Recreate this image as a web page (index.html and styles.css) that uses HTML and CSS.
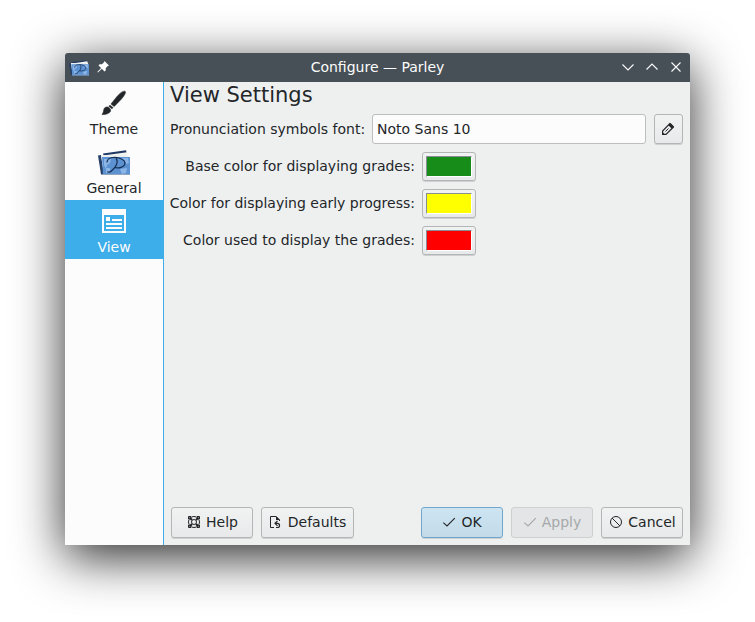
FILE: index.html
```html
<!DOCTYPE html>
<html lang="en">
<head>
<meta charset="utf-8">
<title>Configure — Parley</title>
<link rel="stylesheet" href="styles.css">
</head>
<body>
<svg class="defs" width="0" height="0">
  <symbol id="parley" viewBox="0 0 32 26">
    <path d="M5 3.500 28 .3 29 4 6 7Z" fill="#1f3864"/>
    <path d="M5 5.500 29 2.200 31 7V20H7Z" fill="#f4f4ee"/>
    <path d="M0 5.500 3 5 6 24.500H3Z" fill="#253f66"/>
    <path d="M3 5 28 5V8L6 24Z" fill="#e9eeee"/>
    <path d="M4 7H32V25H5Z" fill="#5d92d2"/>
    <path d="M6 9h7l-1 4-3 2-1 4-2-4zM24 8h6l1 5-3 1zM8 18h4v5H8zM22 19l7-1-1 5-4 1z" fill="#8ab5e6"/>
    <path d="M5 24.500H32" stroke="#91a6bc"/>
    <path d="M9 12.500C9 7 17 6.800 21 8C26 9.500 28 12 26.500 15C25 17.500 20 18.500 17 17.500M18 8.500C21 12 17.500 17.500 14 20.500C12 22.500 9.500 22.500 9.500 21.500" fill="none" stroke="#122b50" stroke-width="1.200"/>
  </symbol>
  <symbol id="check" viewBox="0 0 16 16">
    <path d="M2.300 8.700 6 12 13.800 4.200" fill="none" stroke="currentColor" stroke-width="1.100"/>
  </symbol>
</svg>
<div class="window">
  <header class="titlebar">
    <svg class="app-icon" width="20" height="16" viewBox="0 0 32 26" preserveAspectRatio="none"><use href="#parley" width="32" height="26"/></svg>
    <svg class="pin" width="12" height="12" viewBox="0 0 12 12"><path d="M7.500 0 12 4.500 10.800 5 8.800 7 8.700 9.500 7.500 10.500 4.800 7.800 1 11.600.3 11 4.100 7.100 1.500 4.500 2.500 3.300 5 3.200 7 1.200Z" fill="#fff"/></svg>
    <h1 class="caption">Configure — Parley</h1>
    <div class="controls">
      <svg width="12" height="12" viewBox="0 0 12 12"><path d="M.5 3.500 6 9 11.500 3.500"/></svg>
      <svg width="12" height="12" viewBox="0 0 12 12"><path d="M.5 8.500 6 3 11.500 8.500"/></svg>
      <svg width="12" height="12" viewBox="0 0 12 12"><path d="M1.500 1.500 10.500 10.500M10.500 1.500 1.500 10.500"/></svg>
    </div>
  </header>
  <div class="body">
    <nav class="sidebar">
      <div class="page">
        <svg width="32" height="32" viewBox="0 0 32 32"><path d="M27 4.200C25 3.700 22 6 19 9.500L13 17 16.200 19.500 23 12.500C26 9 28.500 5.500 27 4.200ZM12 18.200 15 20.600 14 21.800 10.800 19.200ZM9.800 20C7 19.600 5.800 21.300 5.600 23.800 5.400 25.300 4.800 26.500 4 27.500 7.500 27.900 11.800 26.300 12.600 24 13 22.300 11.500 20.600 9.800 20Z" fill="#232629" stroke="#232629" stroke-width=".6"/></svg>
        <span>Theme</span>
      </div>
      <div class="page">
        <svg width="32" height="32" viewBox="0 -4 32 32"><use href="#parley" width="32" height="26"/></svg>
        <span>General</span>
      </div>
      <div class="page selected">
        <svg width="32" height="32" viewBox="0 0 32 32"><path d="M4 4H28V28H4ZM6 10V26H26V10Z" fill="#fcfcfc" fill-rule="evenodd"/><path d="M8 12h4v4H8zM14 14h10v2H14zM8 18h16v2H8zM8 22h16v2H8z" fill="#fcfcfc"/></svg>
        <span>View</span>
      </div>
    </nav>
    <main class="content">
      <h2>View Settings</h2>
      <div class="font-row">
        <span>Pronunciation symbols font:</span>
        <div class="field">Noto Sans 10</div>
        <button class="btn edit"><svg width="16" height="16" viewBox="0 0 16 16"><path d="M2.600 13.400V10L9.800 2.700 13.300 6.200 6 13.400Z" fill="none" stroke="#232629" stroke-width="1.200"/><path d="M8.300 4.200 10.500 2 14 5.500 11.800 7.700ZM2 10.500 5.500 14H2Z" fill="#232629"/><path d="M5.500 10.500 8.500 7.500" stroke="#232629"/></svg></button>
      </div>
      <div class="colors">
        <span>Base color for displaying grades:</span><button class="btn color"><i class="swatch green"></i></button>
        <span>Color for displaying early progress:</span><button class="btn color"><i class="swatch yellow"></i></button>
        <span>Color used to display the grades:</span><button class="btn color"><i class="swatch red"></i></button>
      </div>
      <footer>
        <button class="btn"><svg width="16" height="16" viewBox="0 0 16 16" fill="none" stroke="#232629"><circle cx="8" cy="8" r="5.500"/><circle cx="8" cy="8" r="2.500"/><path d="M2.500 5V2.500H5M11 2.500H13.500V5M13.500 11V13.500H11M5 13.500H2.500V11"/><path d="M3.500 3.500 6 6M12.500 3.500 10 6M3.500 12.500 6 10M12.500 12.500 10 10" stroke-width="2"/></svg>Help</button>
        <button class="btn defaults"><svg width="16" height="16" viewBox="0 0 16 16" fill="none" stroke="#232629"><path d="M6 13.500H2.500V2.500H8L11.500 6V7"/><path d="M8 2V6H12Z" fill="#232629" stroke="none"/><path d="M9.500 6.800 7 9.300 9.500 11.800M7 9.300H9.500C12.200 9.300 12.200 13.500 9.500 13.500H8" stroke-width="1.200"/></svg>Defaults</button>
        <button class="btn primary"><svg width="16" height="16"><use href="#check"/></svg>OK</button>
        <button class="btn disabled" disabled><svg width="16" height="16"><use href="#check"/></svg>Apply</button>
        <button class="btn"><svg width="16" height="16" viewBox="0 0 16 16" fill="none" stroke="#232629"><circle cx="8" cy="8" r="5.500"/><path d="M4 4 12 12"/></svg>Cancel</button>
      </footer>
    </main>
  </div>
</div>
</body>
</html>
```
FILE: styles.css
```css
* { box-sizing: border-box; }
body {
  margin: 0;
  padding: 53px 65px 0;
  height: 622px;
  overflow: hidden;
  background: #fff;
  color: #232629;
  font: 14px/18px "DejaVu Sans", sans-serif;
}
svg { display: block; flex: none; }
.defs { position: absolute; }
.window {
  width: 625px;
  height: 492px;
  display: flex;
  flex-direction: column;
  border-radius: 4px 4px 0 0;
  box-shadow: 0 12px 50px rgba(0, 0, 0, .84);
}
.titlebar {
  height: 29px;
  display: flex;
  align-items: center;
  padding: 0 8px 1px 4px;
  background: #475057;
  color: #fcfcfc;
  border-radius: 3px 3px 0 0;
}
.app-icon { margin-top: 1px; }
.pin { margin-left: 8px; }
.caption {
  flex: 1;
  margin: 0;
  padding-left: 24px;
  font-size: 14px;
  font-weight: 400;
  text-align: center;
}
.controls { display: flex; gap: 12px; fill: none; stroke: #fcfcfc; stroke-width: 1.1; }
.body { flex: 1; display: flex; min-height: 0; }
.sidebar { width: 99px; background: #fcfcfc; border-right: 1px solid #3daee9; }
.page {
  height: 59px;
  padding-top: 5px;
  display: flex;
  flex-direction: column;
  align-items: center;
}
.page span { margin-top: 1px; }
.selected { background: #3daee9; color: #fcfcfc; }
.content {
  flex: 1;
  display: flex;
  flex-direction: column;
  background: #eef0f0;
  padding: 1px 7px 7px 6px;
}
h2 { margin: 0; font-size: 21px; line-height: 25px; font-weight: 400; }
.font-row { display: flex; align-items: center; margin-top: 6px; height: 30px; white-space: nowrap; }
.field {
  width: 274px;
  height: 30px;
  margin: 0 8px 0 auto;
  padding: 5px 4px;
  background: #fcfcfc;
  border: 1px solid #bcbebf;
  border-radius: 3px;
}
.btn {
  display: flex;
  align-items: center;
  justify-content: center;
  gap: 4px;
  width: 82px;
  height: 31px;
  padding: 0 0 2px;
  font: inherit;
  color: inherit;
  background: linear-gradient(#f1f2f2, #e8e9ea);
  border: 1px solid #b3b5b6;
  border-radius: 3px;
  box-shadow: 0 1px 0 rgba(0, 0, 0, .13);
}
.edit { width: 29px; height: 30px; padding: 0 2px 0 0; }
.colors {
  display: grid;
  grid-template-columns: 245px 54px;
  grid-auto-rows: 29px;
  column-gap: 7px;
  row-gap: 8px;
  align-items: center;
  justify-items: end;
  margin-top: 8px;
  white-space: nowrap;
}
.colors span { padding-bottom: 2px; }
.color { width: 54px; height: 29px; padding: 0; }
.swatch { width: 46px; height: 21px; border: 1px solid; border-color: #888e93 #fff #fff #888e93; }
.green { background: #188c18; }
.yellow { background: #ff0; }
.red { background: #f00; }
footer { display: flex; gap: 8px; margin-top: auto; padding-left: 1px; }
.defaults { width: 93px; margin-right: auto; padding-right: 1px; }
.primary { padding-right: 1px; background: linear-gradient(#cde5f2, #c3dbe8); border-color: #72a7cd; }
.disabled { padding-right: 1px; background: #e3e5e6; border-color: #cdcfd0; color: #a5a8a9; box-shadow: none; }
```
